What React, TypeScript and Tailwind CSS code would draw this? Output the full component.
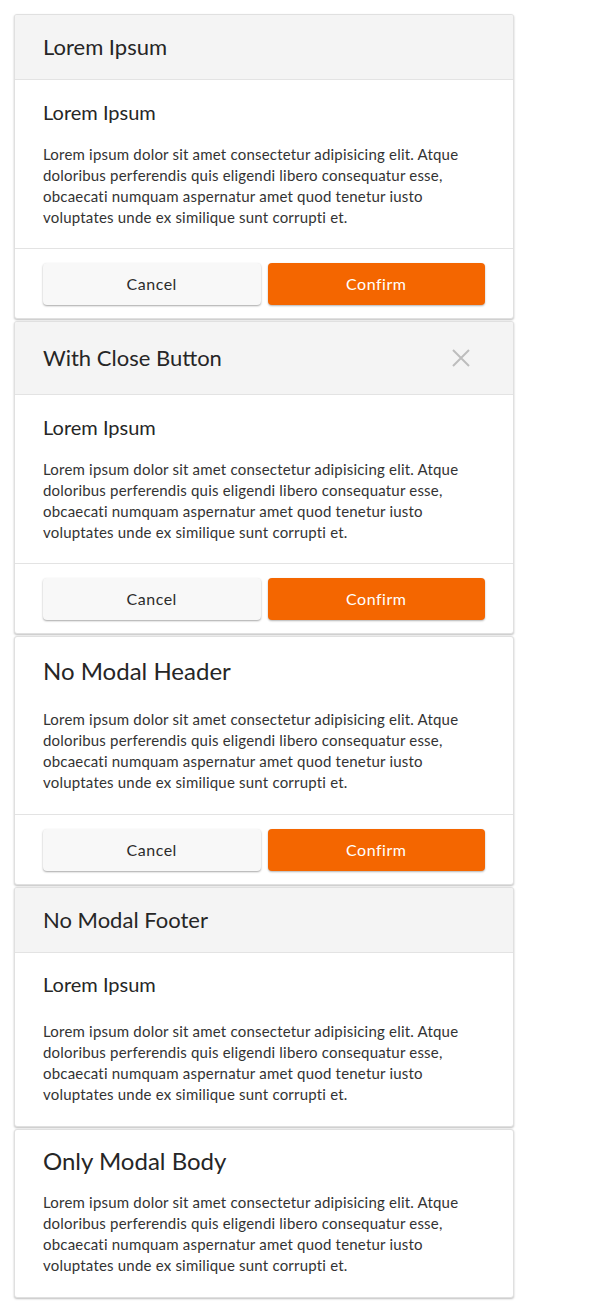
import React from 'react';

const text =
  'Lorem ipsum dolor sit amet consectetur adipisicing elit. Atque doloribus perferendis quis eligendi libero consequatur esse, obcaecati numquam aspernatur amet quod tenetur iusto voluptates unde ex similique sunt corrupti et.';

const font = { fontFamily: '"Source Sans Pro", Lato, "Noto Sans", sans-serif' };

const Paragraph: React.FC = () => (
  <p className="text-[15px] leading-[21px] tracking-[0.2px] text-[#333333]">{text}</p>
);

const Footer: React.FC = () => (
  <div className="flex gap-[7px] border-t border-[#e3e3e3] px-[28px] pt-[14px] pb-[13px]">
    <button className="h-[42px] flex-1 rounded-[4px] bg-[#f8f8f8] text-[16px] tracking-[0.5px] text-[#2b2b2b] shadow-[0_1px_2px_rgba(0,0,0,0.35)]">
      Cancel
    </button>
    <button className="h-[42px] flex-1 rounded-[4px] bg-[#f46600] text-[16px] tracking-[0.5px] text-white shadow-[0_1px_2px_rgba(0,0,0,0.3)]">
      Confirm
    </button>
  </div>
);

const Header: React.FC<{ title: string; close?: boolean }> = ({ title, close }) => (
  <div className="flex items-center justify-between border-b border-[#e3e3e3] bg-[#f4f4f4] pl-[28px] pr-[30px] py-[14px]">
    <h2 className="text-[22px] leading-[36px] text-[#262626]">{title}</h2>
    {close && (
      <button className="flex h-[44px] w-[44px] items-center justify-center text-[#bdbdbd]">
        <svg width="18" height="18" viewBox="0 0 18 18" fill="none" stroke="currentColor" strokeWidth="2">
          <path d="M1 1L17 17M17 1L1 17" />
        </svg>
      </button>
    )}
  </div>
);

const Card: React.FC<{ children: React.ReactNode }> = ({ children }) => (
  <div className="overflow-hidden rounded-[3px] border border-[#e0e0e0] bg-white shadow-[0_1px_2px_rgba(0,0,0,0.25)]">
    {children}
  </div>
);

export default function App() {
  return (
    <div className="min-h-screen bg-white" style={font}>
      <div className="ml-[14px] flex w-[500px] flex-col gap-[2px] pt-[14px]">
        <Card>
          <Header title="Lorem Ipsum" />
          <div className="px-[28px] pt-[19px] pb-[20px]">
            <h3 className="mb-[19px] text-[20px] leading-[26px] text-[#262626]">Lorem Ipsum</h3>
            <Paragraph />
          </div>
          <Footer />
        </Card>

        <Card>
          <Header title="With Close Button" close />
          <div className="px-[28px] pt-[19px] pb-[20px]">
            <h3 className="mb-[19px] text-[20px] leading-[26px] text-[#262626]">Lorem Ipsum</h3>
            <Paragraph />
          </div>
          <Footer />
        </Card>

        <Card>
          <div className="px-[28px] pt-[18px] pb-[21px]">
            <h2 className="mb-[22px] text-[24px] leading-[32px] text-[#262626]">No Modal Header</h2>
            <Paragraph />
          </div>
          <Footer />
        </Card>

        <Card>
          <Header title="No Modal Footer" />
          <div className="px-[28px] pt-[18px] pb-[21px]">
            <h3 className="mb-[24px] text-[20px] leading-[26px] text-[#262626]">Lorem Ipsum</h3>
            <Paragraph />
          </div>
        </Card>

        <Card>
          <div className="px-[28px] pt-[15px] pb-[21px]">
            <h2 className="mb-[15px] text-[24px] leading-[32px] text-[#262626]">Only Modal Body</h2>
            <Paragraph />
          </div>
        </Card>
      </div>
    </div>
  );
}
